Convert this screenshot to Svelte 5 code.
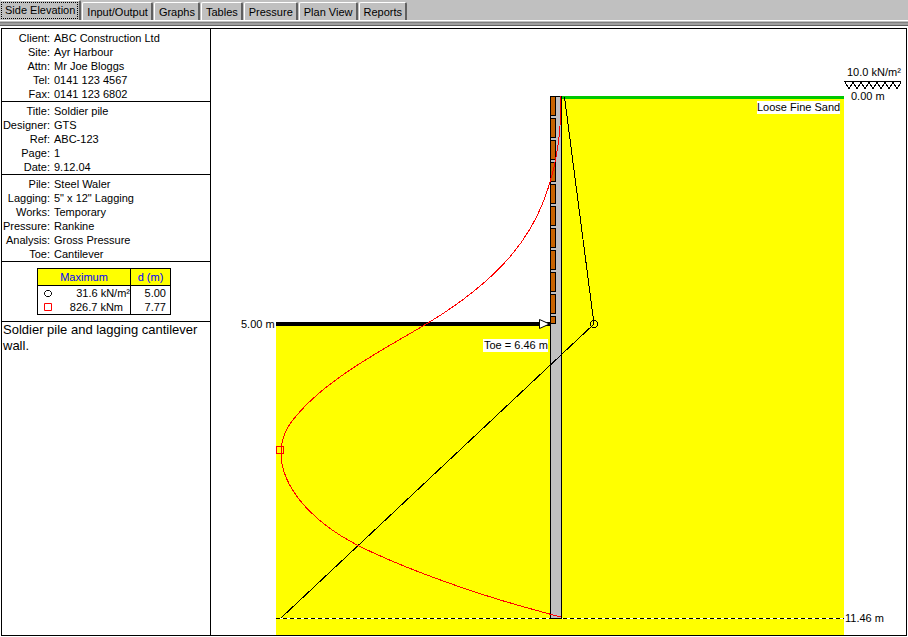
<script lang="ts">
    const tabs = ['Side Elevation', 'Input/Output', 'Graphs', 'Tables', 'Pressure', 'Plan View', 'Reports'];
    let current = $state(0);

    const sections = [
        [
            ['Client', 'ABC Construction Ltd'],
            ['Site', 'Ayr Harbour'],
            ['Attn', 'Mr Joe Bloggs'],
            ['Tel', '0141 123 4567'],
            ['Fax', '0141 123 6802']
        ],
        [
            ['Title', 'Soldier pile'],
            ['Designer', 'GTS'],
            ['Ref', 'ABC-123'],
            ['Page', '1'],
            ['Date', '9.12.04']
        ],
        [
            ['Pile', 'Steel Waler'],
            ['Lagging', '5" x 12" Lagging'],
            ['Works', 'Temporary'],
            ['Pressure', 'Rankine'],
            ['Analysis', 'Gross Pressure'],
            ['Toe', 'Cantilever']
        ]
    ];

    // lagging boards: every 22 units down to the dredge level
    const boards = Array.from({ length: 10 }, (_, i) => 67 + i * 22);
    const surcharge = [0, 1, 2, 3, 4, 5, 6].map((i) => 634 + i * 8);
</script>

<div class="app">
    <div class="tabs" role="tablist">
        {#each tabs as tab, index}
            <button class="tab" class:tab_active={index === current} role="tab" aria-selected={index === current} onclick={() => current = index}><span>{tab}</span></button>
        {/each}
    </div>

    <main class="sheet">
        <aside class="info">
            {#each sections as rows}
                <dl class="section">
                    {#each rows as [label, value]}
                        <dt>{label}:</dt>
                        <dd>{value}</dd>
                    {/each}
                </dl>
            {/each}

            <div class="results">
                <table>
                    <colgroup>
                        <col class="col-mark" />
                        <col />
                        <col class="col-depth" />
                    </colgroup>
                    <thead>
                        <tr>
                            <th colspan="2">Maximum</th>
                            <th>d (m)</th>
                        </tr>
                    </thead>
                    <tbody>
                        <tr>
                            <td class="mark">
                                <svg width="9" height="9" viewBox="0 0 9 9"><path d="M3.5 1.5H6.5L8.5 3.5V5.5L6.5 7.5H3.5L1.5 5.5V3.5Z" fill="none" stroke="#000" /></svg>
                            </td>
                            <td class="value">31.6 kN/m²</td>
                            <td class="depth">5.00</td>
                        </tr>
                        <tr>
                            <td class="mark">
                                <svg width="9" height="9" viewBox="0 0 9 9"><path d="M1.5 0.5H8.5V7.5H1.5Z" fill="none" stroke="#f00" /></svg>
                            </td>
                            <td class="value value_moment">826.7 kNm</td>
                            <td class="depth">7.77</td>
                        </tr>
                    </tbody>
                </table>
            </div>

            <p class="note">Soldier pile and lagging cantilever wall.</p>
        </aside>

        <section class="drawing">
            <svg viewBox="0 0 695 606" role="img" aria-label="Side elevation of the wall">
                <g shape-rendering="crispEdges">
                    <!-- soil -->
                    <path d="M65 297H340V606H65Z" fill="#ff0" />
                    <path d="M350 69H633V606H350Z" fill="#ff0" />
                    <path d="M340 589H350V606H340Z" fill="#ff0" />
                    <path d="M350 67H633V70H350Z" fill="#00c800" />
                    <path d="M65 293H340V297H65Z" fill="#000" />

                    <!-- toe level -->
                    <path d="M65 589.5H633" stroke="#fff" />
                    <path d="M65 589.5H633" stroke="#000" stroke-dasharray="4 3" />

                    <!-- pile and lagging -->
                    <path d="M339.5 67.5H350.5V589.5H339.5Z" fill="#c0c0c0" stroke="#000" />
                    {#each boards as y}
                        <rect x="339.5" y={y + 0.5} width="5" height="19" fill="#c86400" stroke="#000" />
                    {/each}
                    <rect x="339.5" y="287.5" width="5" height="7" fill="#c86400" stroke="#000" />
                </g>

                <!-- pressure diagram -->
                <path class="line" d="M353.5 68L383 295L70 589" stroke="#000" />
                <circle class="line" cx="383" cy="295" r="3.5" stroke="#000" />

                <!-- bending moment -->
                <path
                    class="line"
                    d="M350 67C350 102 347 134 333 171C319 208 291 249 217 294C177 318 118 348 86 386C76 397 70 410 70 424C70 456 98 491 146 516C186 536 241 556 289 571C310 577 330 583 350 588"
                    stroke="#f00"
                />
                <path class="line" d="M65.5 417.5H72.5V424.5H65.5Z" stroke="#f00" />

                <path d="M328.5 290.5L338.5 295L328.5 299.5Z" fill="#fff" stroke="#000" />

                <!-- surcharge -->
                <path class="line" d="M633 52.5H690" stroke="#000" />
                {#each surcharge as x}
                    <path class="line" d="M{x} 53L{x + 4} 60L{x + 8} 53" stroke="#000" />
                {/each}

                <path d="M272 310H337V323H272Z" fill="#fff" />
                <path d="M546 72H629V85H546Z" fill="#fff" />
                <text x="636" y="47">10.0 kN/m²</text>
                <text x="640" y="71">0.00 m</text>
                <text x="546" y="82">Loose Fine Sand</text>
                <text x="30" y="299">5.00 m</text>
                <text x="273" y="320">Toe = 6.46 m</text>
                <text x="634" y="593">11.46 m</text>
            </svg>
        </section>
    </main>
</div>

<style>
    :global(body) {
        margin: 0;
        background: #fff;
    }

    .app {
        display: flex;
        flex-direction: column;
        box-sizing: border-box;
        min-height: 100vh;
        padding-bottom: 1px;
        color: #000;
        font: 11px/14px "Liberation Sans", Arial, sans-serif;
    }

    .tabs {
        display: flex;
        align-items: flex-end;
        gap: 1px;
        height: 20px;
        margin-bottom: 2px;
        background: #c0c0c0;
        border-bottom: 1px solid #fff;
        box-shadow: 0 1px #c0c0c0, 0 2px #808080, 0 4px #a0a0a0, 0 5px #606060;
    }

    .tab {
        height: 18px;
        padding: 0 3px 0 4px;
        font: inherit;
        color: inherit;
        white-space: nowrap;
        background: #c0c0c0;
        border: 1px solid #fff;
        border-right: 2px solid #606060;
        border-bottom: 0;
        border-radius: 2px 2px 0 0;
    }

    .tab_active {
        height: 20px;
        padding: 0 1px;
        border-left: 0;
    }

    .tab_active span {
        display: block;
        padding: 1px 3px 2px 4px;
        outline: 1px dotted #000;
        outline-offset: -1px;
    }

    .sheet {
        display: flex;
        flex: 1;
        margin: 5px 1px 0;
        border: 1px solid #000;
    }

    .info {
        flex: none;
        width: 208px;
        border-right: 1px solid #000;
    }

    .section {
        display: grid;
        grid-template-columns: 48px 1fr;
        column-gap: 4px;
        margin: 0;
        padding: 2px 0 0;
        border-bottom: 1px solid #000;
    }

    dt {
        justify-self: end;
        white-space: nowrap;
    }

    dd {
        margin: 0;
    }

    .results {
        padding: 6px 0 6px 35px;
        border-bottom: 1px solid #000;
    }

    table {
        width: 134px;
        border: 1px solid #000;
        border-spacing: 0;
        table-layout: fixed;
    }

    .col-mark {
        width: 20px;
    }

    .col-depth {
        width: 40px;
    }

    th {
        height: 16px;
        padding: 0;
        color: #00f;
        font-weight: normal;
        background: #ff0;
        border-bottom: 1px solid #000;
    }

    th:last-child,
    .depth {
        border-left: 1px solid #000;
    }

    td {
        height: 14px;
        padding: 0;
        text-align: right;
        white-space: nowrap;
    }

    .mark {
        line-height: 0;
    }

    .mark svg {
        margin-right: 6px;
    }

    .value_moment {
        padding-right: 7px;
    }

    .depth {
        padding-right: 4px;
    }

    .note {
        margin: 0;
        padding: 0 1px;
        font-size: 13px;
        line-height: 16px;
    }

    .drawing {
        flex: 1;
        min-width: 0;
    }

    .drawing svg {
        display: block;
        width: 100%;
    }

    .line {
        fill: none;
        shape-rendering: crispEdges;
    }

    text {
        font-size: 11px;
    }
</style>
